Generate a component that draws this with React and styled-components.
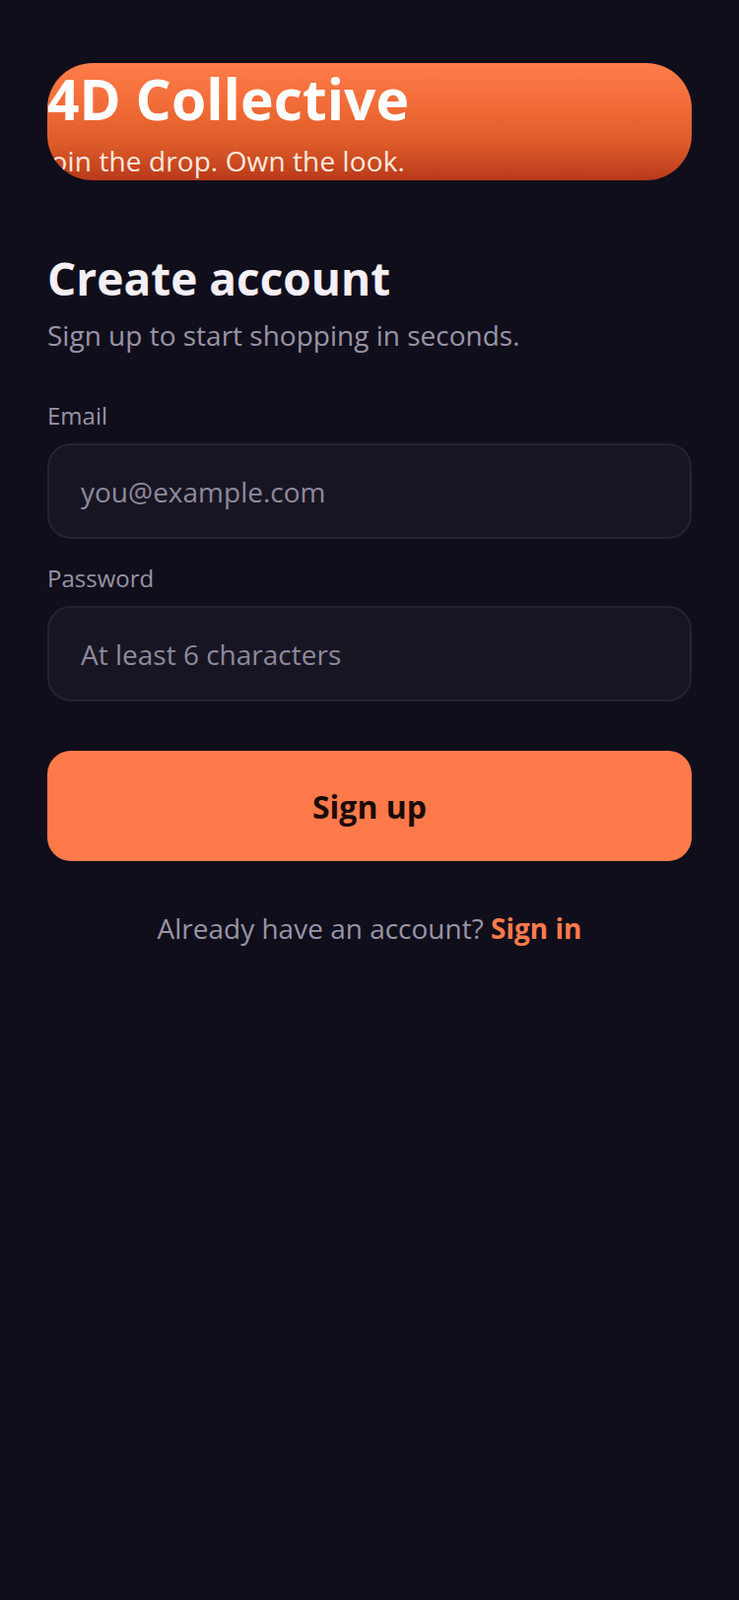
import styled, { createGlobalStyle } from "styled-components"

const Global = createGlobalStyle`
    html, body {
        margin: 0;
        padding: 0;
        background: #100e1b;
    }
    body {
        font-family: "Open Sans", "Noto Sans", sans-serif;
        -webkit-font-smoothing: antialiased;
    }
`

const Page = styled.main`
    min-height: 1624px;
    box-sizing: border-box;
    padding: 64px 48px 0;
    background: #100e1b;
    color: #f5f0f7;
`

const Banner = styled.header`
    height: 119px;
    border-radius: 46px;
    overflow: hidden;
    background: linear-gradient(180deg, #ff7c4b 0%, #ef6a35 40%, #dc5a28 70%, #b8391b 100%);
    box-sizing: border-box;
    padding-top: 1px;
`

const Brand = styled.h1`
    margin: 0;
    font-size: 57px;
    font-weight: 700;
    line-height: 70px;
    color: #ffffff;
    white-space: nowrap;
`

const Tagline = styled.p`
    margin: 10px 0 0 -4px;
    font-size: 28px;
    line-height: 36px;
    color: #ffe9de;
    white-space: nowrap;
    letter-spacing: 0.1px;
`

const Heading = styled.h2`
    margin: 70px 0 0;
    font-size: 46px;
    font-weight: 700;
    line-height: 58px;
    color: #f5eff6;
`

const Lead = styled.p`
    margin: 0;
    font-size: 28px;
    line-height: 58px;
    color: #9a94a6;
`

const Form = styled.form`
    display: flex;
    flex-direction: column;
    margin-top: 37px;
`

const Field = styled.label`
    display: flex;
    flex-direction: column;
    margin-bottom: ${p => p.$last ? "50px" : "24px"};
`

const FieldLabel = styled.span`
    font-size: 24px;
    line-height: 32px;
    color: #9a94a6;
    margin-bottom: 12px;
`

const Input = styled.input`
    height: 97px;
    box-sizing: border-box;
    border: 2px solid #252231;
    border-radius: 24px;
    background: #181523;
    padding: 0 32px;
    font-family: inherit;
    font-size: 28px;
    color: #f5eff6;
    outline: none;
    &::placeholder {
        color: #8e899b;
    }
`

const Button = styled.button`
    height: 112px;
    border: none;
    border-radius: 24px;
    background: #ff7a4b;
    color: #1a0b06;
    font-family: inherit;
    font-size: 32px;
    font-weight: 700;
    cursor: pointer;
`

const Footer = styled.p`
    margin: 49px 0 0;
    text-align: center;
    font-size: 28px;
    line-height: 38px;
    color: #9a94a6;
`

const Link = styled.a`
    color: #ff7a4b;
    font-weight: 700;
    text-decoration: none;
`

function App() {
    return (
        <>
            <Global />
            <Page>
                <Banner>
                    <Brand>4D Collective</Brand>
                    <Tagline>Join the drop. Own the look.</Tagline>
                </Banner>

                <Heading>Create account</Heading>
                <Lead>Sign up to start shopping in seconds.</Lead>

                <Form onSubmit={e => e.preventDefault()}>
                    <Field>
                        <FieldLabel>Email</FieldLabel>
                        <Input type="email" placeholder="you@example.com" />
                    </Field>
                    <Field $last>
                        <FieldLabel>Password</FieldLabel>
                        <Input type="password" placeholder="At least 6 characters" />
                    </Field>
                    <Button type="submit">Sign up</Button>
                </Form>

                <Footer>
                    Already have an account? <Link href="#">Sign in</Link>
                </Footer>
            </Page>
        </>
    )
}

export default App
